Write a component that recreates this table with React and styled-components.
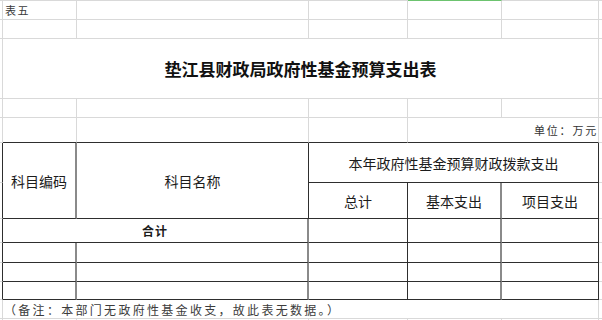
import React from "react";
import styled, { createGlobalStyle, css } from "styled-components";

const Global = createGlobalStyle`
  html, body { margin: 0; padding: 0; background: #fff; overflow: hidden; }
  body { font-family: "Noto Sans CJK SC", "Noto Sans", sans-serif; }
`;

const LINES = {
  none: "none",
  light: "1px solid #d9d9d9",
  dark: "1px solid #2e2e2e",
  mid: "2px solid #8a8a8a",
  green: "1px solid #6cc36f",
};

const Sheet = styled.div`
  display: grid;
  width: 602px;
  grid-template-columns: 3px 74px 232px 99px 94px 97px 3px;
  grid-template-rows: 20px 19px 60px 19px 25px 40px 36px 24px 20px 19px 18px 19px 1px;
`;

const Cell = styled.div`
  box-sizing: border-box;
  min-width: 0;
  display: flex;
  align-items: center;
  justify-content: ${(p) => p.$align || "center"};
  overflow: visible;
  white-space: nowrap;
  border-top: ${(p) => LINES[p.$t || "none"]};
  border-right: ${(p) => LINES[p.$r || "none"]};
  border-bottom: ${(p) => LINES[p.$b || "none"]};
  ${(p) => p.$cols && css`grid-column: span ${p.$cols};`}
  ${(p) => p.$rows && css`grid-row: span ${p.$rows};`}
`;

const SheetLabel = styled.span`
  font-family: "Noto Sans CJK SC", serif;
  font-size: 11px;
  letter-spacing: 1.5px;
  color: #3a3a3a;
  padding-left: 2px;
`;

const Title = styled.span`
  font-family: "Noto Sans CJK SC", sans-serif;
  font-weight: 700;
  font-size: 17px;
  color: #111;
`;

const Unit = styled.span`
  font-size: 11px;
  letter-spacing: 1.8px;
  color: #333;
`;

const HeadText = styled.span`
  font-size: 14px;
  color: #1c1c1c;
`;

const TotalText = styled.span`
  font-size: 12px;
  font-weight: 700;
  color: #1c1c1c;
  letter-spacing: 1px;
`;

const Note = styled.span`
  font-size: 12px;
  letter-spacing: 2.3px;
  color: #3c3c3c;
  padding-left: 1px;
`;

const EmptyRow = ({ top, edge = "light", bottom = "light", rights }) => (
  <>
    <Cell $t={top} $r={edge} $b={bottom === "dark" ? "light" : bottom} />
    {rights.map((r, i) => (
      <Cell key={i} $t={top} $r={r} $b={bottom} />
    ))}
    <Cell $t={top} $b="light" />
  </>
);

const lightRights = ["light", "light", "light", "light", "light"];
const bodyRights = ["mid", "mid", "dark", "mid", "dark"];

export default function App() {
  return (
    <>
      <Global />
      <Sheet>
        {/* row 1 */}
        <Cell $t="light" $r="light" $b="light" />
        <Cell $t="light" $r="light" $b="light" $align="flex-start">
          <SheetLabel>表五</SheetLabel>
        </Cell>
        <Cell $t="light" $r="light" $b="light" />
        <Cell $t="light" $r="light" $b="light" />
        <Cell $t="green" $r="light" $b="light" />
        <Cell $t="light" $r="light" $b="light" />
        <Cell $t="light" $b="light" />

        {/* row 2 */}
        <EmptyRow rights={lightRights} />

        {/* row 3: title */}
        <Cell $r="light" $b="light" />
        <Cell $cols={5} $r="light" $b="light">
          <Title>垫江县财政局政府性基金预算支出表</Title>
        </Cell>
        <Cell $b="light" />

        {/* row 4 */}
        <EmptyRow rights={lightRights} />

        {/* row 5: unit */}
        <Cell $r="light" $b="light" />
        <Cell $r="light" $b="dark" />
        <Cell $r="light" $b="dark" />
        <Cell $r="light" $b="dark" />
        <Cell $cols={2} $r="light" $b="dark" $align="flex-end">
          <Unit>单位：万元</Unit>
        </Cell>
        <Cell $b="light" />

        {/* row 6-7: header */}
        <Cell $r="dark" $b="light" />
        <Cell $rows={2} $r="mid" $b="dark">
          <HeadText>科目编码</HeadText>
        </Cell>
        <Cell $rows={2} $r="dark" $b="dark">
          <HeadText>科目名称</HeadText>
        </Cell>
        <Cell $cols={3} $r="dark" $b="dark">
          <HeadText>本年政府性基金预算财政拨款支出</HeadText>
        </Cell>
        <Cell $b="light" />

        <Cell $r="dark" $b="light" />
        <Cell $r="dark" $b="dark">
          <HeadText>总计</HeadText>
        </Cell>
        <Cell $r="mid" $b="dark">
          <HeadText>基本支出</HeadText>
        </Cell>
        <Cell $r="dark" $b="dark">
          <HeadText>项目支出</HeadText>
        </Cell>
        <Cell $b="light" />

        {/* row 8: total */}
        <Cell $r="dark" $b="light" />
        <Cell $cols={2} $r="mid" $b="dark">
          <TotalText>合计</TotalText>
        </Cell>
        <Cell $r="dark" $b="dark" />
        <Cell $r="mid" $b="dark" />
        <Cell $r="dark" $b="dark" />
        <Cell $b="light" />

        {/* rows 9-11 */}
        <EmptyRow edge="dark" bottom="dark" rights={bodyRights} />
        <EmptyRow edge="dark" bottom="dark" rights={bodyRights} />
        <EmptyRow edge="dark" bottom="dark" rights={bodyRights} />

        {/* row 12: note */}
        <Cell $r="light" $b="light" />
        <Cell $cols={5} $r="light" $b="light" $align="flex-start">
          <Note>（备注：本部门无政府性基金收支，故此表无数据。）</Note>
        </Cell>
        <Cell $b="light" />

        {/* row 13 */}
        <Cell $r="light" />
        <Cell $r="light" />
        <Cell $r="light" />
        <Cell $r="light" />
        <Cell $r="light" />
        <Cell $r="light" />
        <Cell />
      </Sheet>
    </>
  );
}
